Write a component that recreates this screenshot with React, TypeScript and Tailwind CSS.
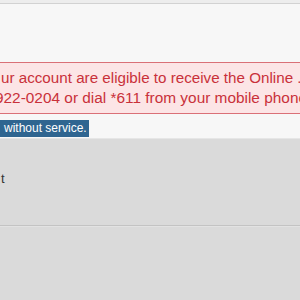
export default function App() {
  return (
    <div className="w-[300px] h-[300px] overflow-hidden flex flex-col bg-[#f7f7f7]" style={{ fontFamily: '"Liberation Sans", Arial, sans-serif' }}>
      <div className="h-[3px] bg-[#ededed] shrink-0" />
      <div className="h-[1px] bg-[#d2d2d2] shrink-0" />
      <div className="h-[58px] shrink-0" />
      <div className="-ml-[10px] w-[330px] shrink-0 border border-[#da7077] bg-[#fce5e6] pt-[5px] h-[52px] leading-[20px] text-[#c9313a] whitespace-nowrap overflow-hidden">
        <div className="ml-[10px] text-[15.2px]">ur account are eligible to receive the Online .</div>
        <div className="ml-[4px] text-[15.4px]">922-0204 or dial *611 from your mobile phone</div>
      </div>
      <div className="h-[24px] shrink-0 pt-[6px]">
        <div className="w-fit bg-[#2f6590] text-white text-[12px] leading-[17px] pl-[4px] pr-[2px]">without service.</div>
      </div>
      <div className="flex-1 bg-[#dadada] flex flex-col border-t border-[#e6e6e6]">
        <div className="h-[32px] shrink-0" />
        <div className="text-[13px] leading-[15px] text-[#333] pl-[1px]">t</div>
        <div className="h-[39px] shrink-0" />
        <div className="h-[1px] bg-[#c3c3c3] shrink-0" />
        <div className="h-[1px] bg-[#e2e2e2] shrink-0" />
      </div>
    </div>
  );
}
